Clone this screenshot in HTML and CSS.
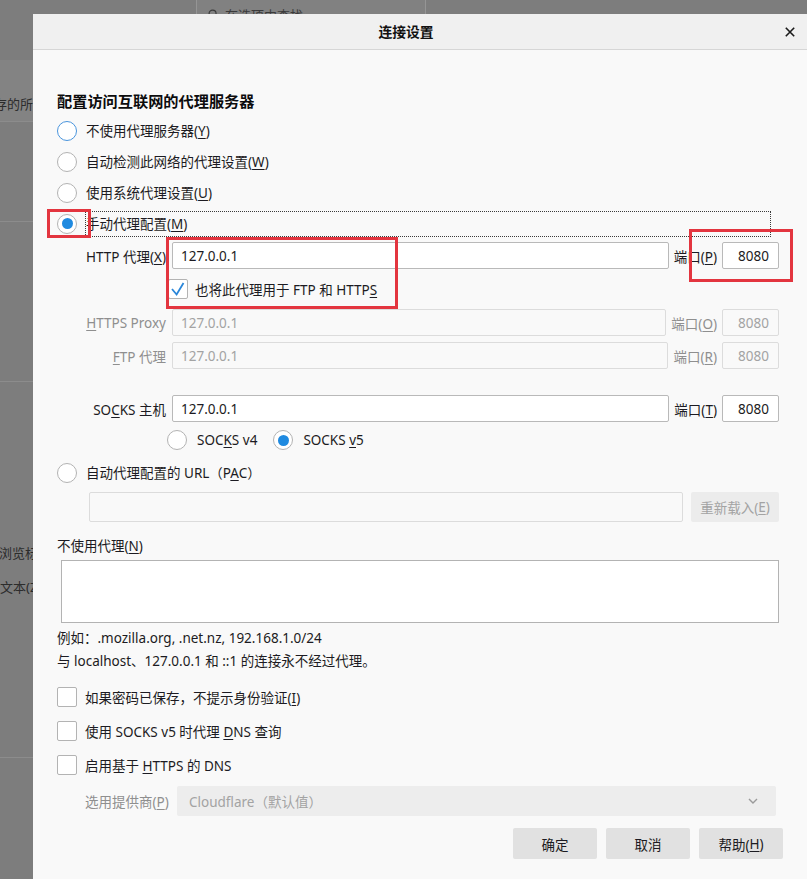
FILE: index.html
```html
<!DOCTYPE html>
<html lang="zh-CN">
<head>
<meta charset="utf-8">
<title>连接设置</title>
<link rel="stylesheet" href="styles.css">
</head>
<body>
<div class="backdrop">
  <div class="bg-head">
    <div class="search">
      <svg class="search-icon" viewBox="0 0 12 12" width="11" height="11"><circle cx="5" cy="5" r="3.8" fill="none" stroke="#3a3a3a" stroke-width="1.3"/><line x1="7.8" y1="7.8" x2="11" y2="11" stroke="#3a3a3a" stroke-width="1.3"/></svg>
      <span>在选项中查找</span>
    </div>
  </div>
  <div class="bg-band"><span class="bg-text t1">保存的所有</span></div>
  <div class="bg-sec s1"></div>
  <div class="bg-sec s2"></div>
  <div class="bg-sec s3">
    <div class="bg-text t2">浏览标签</div>
    <div class="bg-text t3">文本(Z)</div>
  </div>
  <div class="bg-sec s4"></div>
</div>

<div class="dialog">
  <div class="titlebar">
    <span class="title">连接设置</span>
    <span class="close" aria-label="关闭"><svg viewBox="0 0 10 10" width="10" height="10"><path d="M0.8 0.8 L9.2 9.2 M9.2 0.8 L0.8 9.2" stroke="#1a1a1a" stroke-width="1.6" fill="none"/></svg></span>
  </div>
  <div class="content">
    <div class="heading">配置访问互联网的代理服务器</div>
    <div class="opt"><span class="radio focus"></span><span>不使用代理服务器(<u>Y</u>)</span></div>
    <div class="opt"><span class="radio"></span><span>自动检测此网络的代理设置(<u>W</u>)</span></div>
    <div class="opt"><span class="radio"></span><span>使用系统代理设置(<u>U</u>)</span></div>
    <div class="opt opt-manual"><span class="radio on"></span><span class="dotted">手动代理配置(<u>M</u>)</span></div>

    <div class="prow">
      <span class="plabel">HTTP 代理(<u>X</u>)</span>
      <input class="field" type="text" value="127.0.0.1">
      <span class="portlabel">端口(<u>P</u>)</span>
      <input class="field port" type="text" value="8080">
    </div>
    <div class="crow-share">
      <span class="check checked"><svg viewBox="0 0 20 20" width="20" height="20"><polyline points="4,10 8.6,15.5 15.5,4" fill="none" stroke="#2a86d9" stroke-width="1.8"/></svg></span>
      <span>也将此代理用于 FTP 和 HTTP<u>S</u></span>
    </div>
    <div class="prow dis r-https">
      <span class="plabel"><u>H</u>TTPS Proxy</span>
      <input class="field" type="text" value="127.0.0.1" disabled>
      <span class="portlabel">端口(<u>O</u>)</span>
      <input class="field port" type="text" value="8080" disabled>
    </div>
    <div class="prow dis r-ftp">
      <span class="plabel"><u>F</u>TP 代理</span>
      <input class="field" type="text" value="127.0.0.1" disabled>
      <span class="portlabel">端口(<u>R</u>)</span>
      <input class="field port" type="text" value="8080" disabled>
    </div>
    <div class="prow r-socks">
      <span class="plabel">SO<u>C</u>KS 主机</span>
      <input class="field" type="text" value="127.0.0.1">
      <span class="portlabel">端口(<u>T</u>)</span>
      <input class="field port" type="text" value="8080">
    </div>
    <div class="socksver">
      <span class="radio"></span><span>SOC<u>K</u>S v4</span>
      <span class="radio on v5"></span><span>SOCKS <u>v</u>5</span>
    </div>
    <div class="opt opt-pac"><span class="radio"></span><span>自动代理配置的 URL（P<u>A</u>C）</span></div>
    <div class="pacrow">
      <input class="field pacfield" type="text" value="" disabled>
      <span class="btn dis-btn">重新载入(<u>E</u>)</span>
    </div>
    <div class="noproxy-label">不使用代理(<u>N</u>)</div>
    <textarea class="noproxy"></textarea>
    <div class="hint">例如：.mozilla.org, .net.nz, 192.168.1.0/24</div>
    <div class="hint">与 localhost、127.0.0.1 和 ::1 的连接永不经过代理。</div>
    <div class="crow first"><span class="check"></span><span>如果密码已保存，不提示身份验证(<u>I</u>)</span></div>
    <div class="crow"><span class="check"></span><span>使用 SOCKS v5 时代理 <u>D</u>NS 查询</span></div>
    <div class="crow"><span class="check"></span><span>启用基于 <u>H</u>TTPS 的 DNS</span></div>
    <div class="provider">
      <span class="provlabel">选用提供商(<u>P</u>)</span>
      <div class="select"><span>Cloudflare（默认值）</span><svg viewBox="0 0 10 6" width="10" height="6"><polyline points="1,1 5,5 9,1" fill="none" stroke="#9a9a9a" stroke-width="1.4"/></svg></div>
    </div>
    <div class="buttons">
      <span class="btn">确定</span>
      <span class="btn">取消</span>
      <span class="btn">帮助(<u>H</u>)</span>
    </div>
  </div>
</div>

<div class="mark mark-radio"></div>
<div class="mark mark-http"></div>
<div class="mark mark-port"></div>
</body>
</html>
```

FILE: styles.css
```css
* { box-sizing: border-box; }
html, body { margin: 0; padding: 0; }
body {
  width: 807px;
  height: 879px;
  overflow: hidden;
  position: relative;
  background: #7d7d7d;
  font-family: "Noto Sans", "Noto Sans CJK SC", sans-serif;
  font-size: 13.5px;
  color: #1c1b22;
}
u { text-decoration: underline; text-underline-offset: 2px; text-decoration-thickness: 1px; }

/* ---------- backdrop page (dimmed) ---------- */
.backdrop { display: flex; flex-direction: column; height: 879px; }
.bg-head { height: 60px; display: flex; }
.search {
  margin-left: 196px;
  margin-top: -6px;
  width: 230px;
  height: 40px;
  border: 1px solid #959595;
  border-radius: 3px;
  background: #818181;
  display: flex;
  align-items: center;
  gap: 6px;
  padding-left: 11px;
  color: #3a3a3a;
  font-size: 13px;
}
.bg-band { height: 62px; background: #838383; border-bottom: 1px solid #8c8c8c; padding-top: 34px; }
.bg-text { color: #2c2c2c; font-size: 13px; line-height: 20px; white-space: nowrap; }
.t1 { display: block; margin-left: -19px; }
.bg-sec { border-bottom: 1px solid #8c8c8c; }
.s1 { height: 100px; }
.s2 { height: 160px; }
.s3 { height: 376px; padding-top: 161px; }
.t2 { margin-left: -1px; }
.t3 { margin-top: 14px; }
.s4 { flex: 1; border-bottom: none; }

/* ---------- dialog ---------- */
.dialog {
  position: absolute;
  left: 33px;
  top: 14px;
  width: 774px;
  height: 865px;
  background: #f9f9f9;
  display: flex;
  flex-direction: column;
}
.titlebar {
  height: 36px;
  background: #f0f0f0;
  border-bottom: 1px solid #d6d6d6;
  display: grid;
  grid-template-columns: 1fr auto 1fr;
  align-items: center;
  padding-right: 28px;
}
.title { grid-column: 2; font-weight: 700; font-size: 13.8px; line-height: 20px; color: #111; }
.close { grid-column: 3; justify-self: end; margin-right: -16px; display: flex; }

.content {
  padding: 41px 28px 0 24px;
  display: flex;
  flex-direction: column;
}
.heading { font-size: 15.2px; font-weight: 700; line-height: 20px; margin-bottom: 4px; color: #0c0c0d; }

.opt { height: 31px; display: flex; align-items: center; gap: 9px; line-height: 20px; }
.opt-manual { gap: 8px; }
.dotted {
  flex: 1;
  height: 26px;
  margin-right: 8px;
  border: 1px dotted #3a3a3a;
  border-left: none;
  display: flex;
  align-items: center;
  padding-left: 1px;
}
.dotted { border-left: 1px dotted #3a3a3a; padding-left: 0; }

.radio {
  width: 20px; height: 20px;
  border-radius: 50%;
  border: 1px solid #b3b3b3;
  background: #fff;
  flex: none;
  display: inline-flex;
  align-items: center;
  justify-content: center;
}
.radio.focus { border-color: #4a95dd; }
.radio.on::after {
  content: "";
  width: 11px; height: 11px;
  border-radius: 50%;
  background: #1f8ae0;
}

.check {
  width: 20px; height: 20px;
  border: 1px solid #b3b3b3;
  border-radius: 2px;
  background: #fff;
  flex: none;
  display: inline-flex;
}
.check svg { margin: -1px; }

.prow { height: 27px; display: flex; align-items: center; margin-top: 3px; }
.plabel { width: 109px; margin-right: 6px; text-align: right; white-space: nowrap; }
.portlabel { margin: 0 5px; white-space: nowrap; }
.field {
  font: inherit;
  color: #1c1b22;
  height: 27px;
  border: 1px solid #b9b9b9;
  border-radius: 2px;
  background: #fff;
  padding: 0 8px;
  outline: none;
  min-width: 0;
  flex: 1;
}
.field.port { flex: none; width: 57px; text-align: right; padding-right: 9px; }
.field:disabled { background: #f9f9f9; border-color: #dcdcdc; color: #a3a3a3; }
.dis .plabel, .dis .portlabel { color: #8f8f8f; }
.r-https { margin-top: 6px; }
.r-ftp { margin-top: 6px; }
.r-socks { margin-top: 26px; }

.crow-share { height: 29px; margin-top: 5px; padding-left: 111px; display: flex; align-items: center; gap: 7px; }

.socksver { height: 28px; margin-top: 4px; padding-left: 110px; display: flex; align-items: center; gap: 10px; }
.socksver .v5 { margin-left: 6px; }

.opt-pac { margin-top: 3px; }
.pacrow { height: 30px; margin-top: 4px; padding-left: 32px; display: flex; gap: 8px; }
.pacfield { height: 30px; background: #fbfbfb; }
.btn {
  height: 31px;
  width: 84px;
  background: #e1e1e1;
  border-radius: 2px;
  display: inline-flex;
  align-items: center;
  justify-content: center;
  color: #1c1b22;
  white-space: nowrap;
}
.dis-btn { height: 30px; width: 88px; background: #ececec; color: #a3a3a3; }

.noproxy-label { line-height: 20px; margin-top: 14px; }
.noproxy {
  margin: 4px 0 0 4px;
  height: 63px;
  border: 1px solid #b3b3b3;
  background: #fff;
  resize: none;
  font: inherit;
  outline: none;
}
.hint { line-height: 23px; }
.hint:first-of-type { margin-top: 4px; }
.noproxy + .hint { margin-top: 4px; }

.crow { height: 34px; display: flex; align-items: center; gap: 8px; }
.crow.first { margin-top: 7px; }

.provider { height: 30px; margin-top: 4px; padding-left: 28px; display: flex; align-items: center; margin-right: 3px; }
.provlabel { width: 92px; color: #8f8f8f; white-space: nowrap; }
.select {
  flex: 1;
  height: 30px;
  background: #ededed;
  border-radius: 2px;
  display: flex;
  align-items: center;
  justify-content: space-between;
  padding: 0 18px 0 12px;
  color: #a3a3a3;
}

.buttons { margin-top: 12px; margin-right: -4px; display: flex; justify-content: flex-end; gap: 9px; }

/* ---------- annotation boxes ---------- */
.mark { position: absolute; border: 3px solid #e3353f; }
.mark-radio { left: 47px; top: 209px; width: 44px; height: 29px; }
.mark-http { left: 166px; top: 237px; width: 232px; height: 72px; }
.mark-port { left: 689px; top: 229px; width: 104px; height: 53px; }
```
